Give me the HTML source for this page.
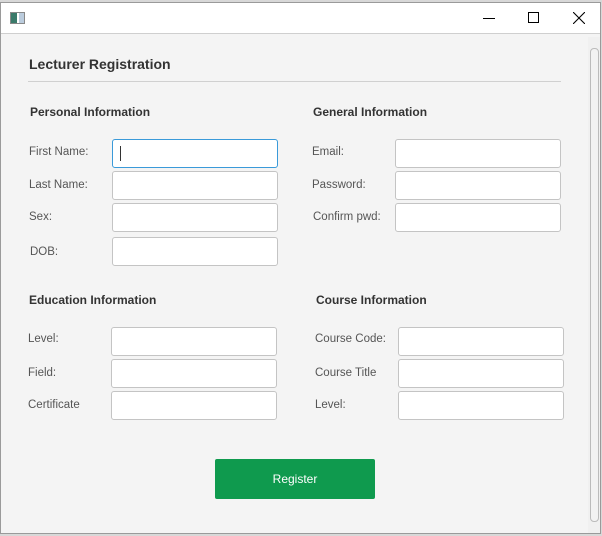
<!DOCTYPE html>
<html><head><style>
*{margin:0;padding:0;box-sizing:border-box}
body{width:602px;height:536px;background:#d8d8d8;position:relative;overflow:hidden;font-family:"Liberation Sans",sans-serif}
.win{position:absolute;left:0;top:2px;width:601px;height:532px;background:#f4f4f4;border:1px solid #9a9a9a}
.tb{position:absolute;left:0;top:0;width:100%;height:31px;background:#fff;border-bottom:1px solid #cfcfcf}
.a{position:absolute}
.l{position:absolute;font-size:11.5px;color:#555}
.h{position:absolute;font-size:12px;font-weight:bold;color:#333}
.f{position:absolute;width:166px;height:29px;background:#fff;border:1px solid #c4c4c4;border-radius:3px}
</style></head><body>
<div class="win">
<div class="tb">
<div class="a" style="left:9px;top:9px;width:15px;height:12px;border:1px solid #888;background:linear-gradient(90deg,#3a7a6a 0 45%,#fff 45% 60%,#bcd 60%)"></div>
<div class="a" style="left:482px;top:15px;width:12px;height:1px;background:#000"></div>
<div class="a" style="left:527px;top:9px;width:11px;height:11px;border:1px solid #000"></div>
<svg class="a" style="left:572px;top:9px" width="12" height="12"><path d="M0 0L12 12M12 0L0 12" stroke="#000" stroke-width="1.1"/></svg>
</div>
<div class="a" style="left:587px;top:34px;width:12px;height:496px;background:#f0f0f0"></div>
<div class="a" style="left:589px;top:45px;width:9px;height:474px;border:1px solid #bbb;border-radius:4px;background:#f2f2f2"></div>
</div>
<div class="a" style="left:29px;top:56px;font-size:14px;font-weight:bold;color:#333">Lecturer Registration</div>
<div class="a" style="left:28px;top:81px;width:533px;height:1px;background:#d0d0d0"></div>
<div class="h" style="left:30px;top:105px">Personal Information</div>
<div class="h" style="left:313px;top:105px">General Information</div>
<div class="h" style="left:29px;top:293px">Education Information</div>
<div class="h" style="left:316px;top:293px">Course Information</div>
<div class="l" style="left:29px;top:146px">First Name:</div>
<div class="l" style="left:29px;top:179px">Last Name:</div>
<div class="l" style="left:29px;top:211px">Sex:</div>
<div class="l" style="left:30px;top:246px">DOB:</div>
<div class="f" style="left:112px;top:139px;border:1.5px solid #3a9ad9"><div class="a" style="left:7px;top:6px;width:1px;height:15px;background:#333"></div></div>
<div class="f" style="left:112px;top:171px"></div>
<div class="f" style="left:112px;top:203px"></div>
<div class="f" style="left:112px;top:237px"></div>
<div class="l" style="left:312px;top:146px">Email:</div>
<div class="l" style="left:312px;top:179px">Password:</div>
<div class="l" style="left:313px;top:211px">Confirm pwd:</div>
<div class="f" style="left:395px;top:139px"></div>
<div class="f" style="left:395px;top:171px"></div>
<div class="f" style="left:395px;top:203px"></div>
<div class="l" style="left:28px;top:333px">Level:</div>
<div class="l" style="left:28px;top:367px">Field:</div>
<div class="l" style="left:28px;top:399px">Certificate</div>
<div class="f" style="left:111px;top:327px"></div>
<div class="f" style="left:111px;top:359px"></div>
<div class="f" style="left:111px;top:391px"></div>
<div class="l" style="left:315px;top:333px">Course Code:</div>
<div class="l" style="left:315px;top:367px">Course Title</div>
<div class="l" style="left:315px;top:399px">Level:</div>
<div class="f" style="left:398px;top:327px"></div>
<div class="f" style="left:398px;top:359px"></div>
<div class="f" style="left:398px;top:391px"></div>
<div class="a" style="left:215px;top:459px;width:160px;height:40px;background:#0f9a4e;border-radius:2px;color:#fff;font-size:12px;text-align:center;line-height:40px">Register</div>
</body></html>
